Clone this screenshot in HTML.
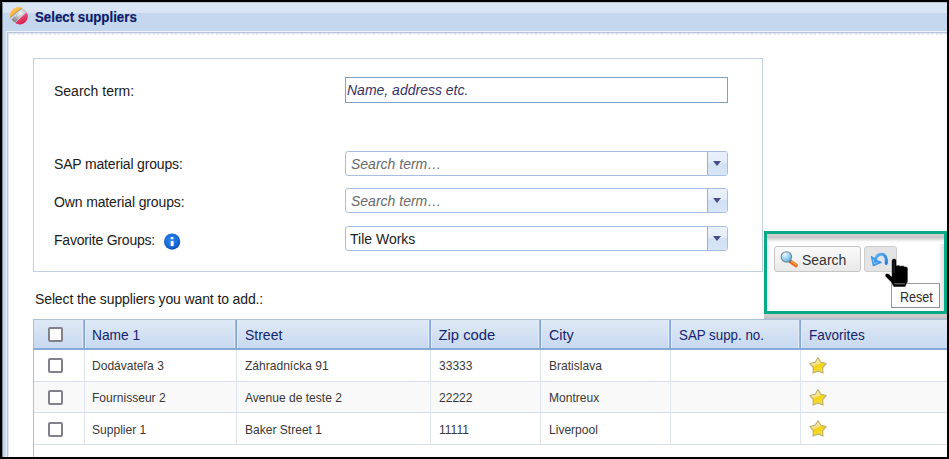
<!DOCTYPE html>
<html><head><meta charset="utf-8">
<style>
*{margin:0;padding:0;box-sizing:border-box}
html,body{width:949px;height:459px;overflow:hidden;background:#000}
body{position:relative;font-family:"Liberation Sans",sans-serif;font-size:14px;color:#222}
.a{position:absolute;white-space:nowrap}
.b{position:absolute}
#win{position:absolute;left:2px;top:2px;width:945px;height:455px;background:#c4d7ee;overflow:hidden}
#tt{position:absolute;left:0;top:0;width:945px;height:11px;background:#d9e5f4}
#title{left:34.5px;top:8.5px;font-weight:bold;font-size:14.5px;transform:scaleX(0.915);transform-origin:0 0;color:#0e1a6a;-webkit-text-stroke:0.2px #0e1a6a;line-height:16px}
.lbl{font-size:14px;line-height:16px;color:#1a1a1a}
.fs{position:absolute;left:33px;top:58px;width:730px;height:214px;border:1px solid #c2d0e2}
.inp{position:absolute;left:345px;width:383px;height:26px;border:1px solid #7f9fc6;background:#fff}
.dd{position:absolute;left:345px;width:383px;height:25px;border:1px solid #a7bfdf;border-radius:3px;background:#fff}
.ddb{position:absolute;right:0;top:0;width:20px;height:23px;border-left:1px solid #95b0d6;border-radius:0 2px 2px 0;background:linear-gradient(#eaf1fb 0,#e3ecf8 45%,#d2e1f3 50%,#d7e5f5 100%)}
.ddb:after{content:"";position:absolute;left:5px;top:9px;border-left:4px solid transparent;border-right:4px solid transparent;border-top:5px solid #4a4d8c}
.ph{font-style:italic;color:#6a6a6a;font-size:14px;line-height:16px}
.btn{position:absolute;top:246px;height:26px;border:1px solid #c4c4c4;border-radius:3px;background:linear-gradient(#fafafa,#e9e9e9)}
.tbl{position:absolute;left:33px;top:319px;width:914px}
.hdr{position:absolute;left:0;top:0;width:914px;height:31px;border-top:1px solid #adc0da;border-left:1px solid #a9bfd9;border-bottom:2px solid #86a9d9;background:linear-gradient(#dfe9f6,#c7d9f0)}
.hc{position:absolute;top:0;height:28px;width:2px;background:linear-gradient(90deg,#98b6e0 50%,#85a8da 50%);box-shadow:-1px 0 0 #e3ebf6,1px 0 0 #e3ebf6}
.ht{position:absolute;top:7.2px;font-size:14.8px;transform-origin:0 0;line-height:16px;color:#15246e}
.row{position:absolute;left:0;width:914px;border-bottom:1px solid #d9deeb}
.bc{position:absolute;width:1px;background:#dde4f0}
.td{position:absolute;font-size:13.1px;line-height:14px;color:#383838;transform:scaleX(0.92);transform-origin:0 0}
.cb{position:absolute;left:15px;width:15px;height:15px;border:2px solid #83808b;border-radius:2px;background:#fff}
</style></head><body>
<div id="win">
  <div id="tt"></div>
  <div class="b" style="left:0;top:0;width:1px;height:455px;background:#7d8794"></div>
  <div class="b" style="left:0;top:0;width:945px;height:1px;background:#b9c6d6"></div>
  <div class="b" style="left:4px;top:29px;width:941px;height:426px;background:#eef2f8"></div>
  <div class="b" style="left:5px;top:30px;width:940px;height:425px;background:#b6c5d9"></div>
  <div class="b" style="left:6px;top:31px;width:939px;height:424px;background:#e0e7f0"></div>
  <div class="b" style="left:7px;top:32px;width:938px;height:423px;background:#fff;border-top:1px solid #f1f4f8"></div>
  <div class="b" style="left:7px;top:31px;width:938px;height:1px;background:repeating-linear-gradient(90deg,#d9e0ea 0 1.5px,#eaeef4 1.5px 4.5px)"></div>
  <div class="b" style="left:7px;top:32px;width:938px;height:1px;background:repeating-linear-gradient(90deg,#e8edf4 0 1.5px,#f6f8fb 1.5px 4.5px)"></div>
</div>
<!-- title icon -->
<svg class="b" style="left:6px;top:4px" width="26" height="26" viewBox="0 0 26 26">
  <defs>
    <linearGradient id="go" x1="0.2" y1="0.1" x2="0.8" y2="0.9"><stop offset="0" stop-color="#ffc85a"/><stop offset="1" stop-color="#eea02a"/></linearGradient>
    <linearGradient id="gp" x1="0.2" y1="0" x2="0.7" y2="1"><stop offset="0" stop-color="#f7a2b6"/><stop offset="0.45" stop-color="#e6456e"/><stop offset="1" stop-color="#d21a4a"/></linearGradient>
    <radialGradient id="gg" cx="0.6" cy="0.3" r="0.7"><stop offset="0" stop-color="#f6f6f6"/><stop offset="0.6" stop-color="#b4b4b4"/><stop offset="1" stop-color="#868686"/></radialGradient>
  </defs>
  <path d="M5.6,15.4 Q10.6,10.2 17.2,5 A8.6,8.6 0 0 1 20.2,8 L9,18.4 A8.6,8.6 0 0 1 5.6,15.4 Z" fill="url(#gg)"/>
  <path d="M4.0,13.8 A8.8,8.8 0 0 1 16.6,4.0 Q10.4,8.4 4.0,13.8 Z" fill="url(#go)"/>
  <path d="M16.6,4.0 Q10.4,8.4 4.0,13.8" fill="none" stroke="#5a5048" stroke-width="0.6" opacity="0.7"/>
  <path d="M9.2,19 L20.6,8.2 A8,8 0 0 1 9.2,19 Z" fill="url(#gp)"/>
</svg>
<div class="a" id="title">Select suppliers</div>

<div class="fs"></div>
<div class="a lbl" style="left:54px;top:83px">Search term:</div>
<div class="inp" style="top:77px"><div class="a ph" style="left:1px;top:4px;color:#33336a">Name, address etc.</div></div>
<div class="a lbl" style="left:54px;top:156px;letter-spacing:-0.17px">SAP material groups:</div>
<div class="a lbl" style="left:54px;top:194px;letter-spacing:-0.13px">Own material groups:</div>
<div class="a lbl" style="left:54px;top:232px;letter-spacing:-0.2px">Favorite Groups:</div>
<svg class="b" style="left:163px;top:232.5px" width="18" height="18" viewBox="0 0 18 18">
  <defs><radialGradient id="gi" cx="0.45" cy="0.4" r="0.6"><stop offset="0" stop-color="#2c8af2"/><stop offset="0.7" stop-color="#1668d8"/><stop offset="1" stop-color="#0a48b0"/></radialGradient></defs>
  <circle cx="9.1" cy="8.6" r="8.1" fill="url(#gi)"/>
  <rect x="7.6" y="3.9" width="3" height="2.4" rx="1" fill="#fff"/>
  <rect x="7.7" y="7.9" width="2.9" height="5.2" fill="#fff"/>
</svg>
<div class="dd" style="top:151px"><div class="a ph" style="left:5px;top:4px">Search term…</div><div class="ddb"></div></div>
<div class="dd" style="top:188px"><div class="a ph" style="left:5px;top:4px">Search term…</div><div class="ddb"></div></div>
<div class="dd" style="top:226px"><div class="a lbl" style="left:4px;top:4px;color:#222">Tile Works</div><div class="ddb"></div></div>

<!-- green highlight box -->
<div class="b" style="left:761px;top:232px;width:3px;height:82px;background:linear-gradient(90deg,rgba(0,0,0,0),rgba(0,0,0,0.05))"></div>
<div class="b" style="left:764px;top:314px;width:183px;height:5px;background:linear-gradient(#d3caca 0,#d0c9c9 2px,#c7c7c7 2px,#c9c9c9 4px,#b4bccb 4px,#b4bccb 5px)"></div>
<div class="b" style="left:764px;top:231px;width:183px;height:83px;border:3px solid #08a986;background:#fff"></div>
<div class="b" style="left:767px;top:234px;width:1px;height:77px;background:#efe3e3"></div>
<div class="b" style="left:768px;top:234px;width:4px;height:77px;background:linear-gradient(90deg,#efefef,#fff)"></div>
<div class="b" style="left:943px;top:234px;width:1px;height:77px;background:#ede0e0"></div>
<div class="b" style="left:938px;top:234px;width:5px;height:77px;background:linear-gradient(90deg,#fff,#e2e2e2)"></div>
<div class="b" style="left:767px;top:234px;width:177px;height:10px;background:linear-gradient(#d6cdcd 0,#d2cbcb 2px,#c7c7c7 2px,#c9c9c9 4px,#dadada 5px,#e8e8e8 6px,#f4f4f4 7px,#fff 9px)"></div>
<div class="btn" style="left:774px;width:87px"></div>
<svg class="b" style="left:776px;top:248px" width="26" height="22" viewBox="0 0 26 22">
  <defs><radialGradient id="gl" cx="0.35" cy="0.28" r="0.75"><stop offset="0" stop-color="#f0fbff"/><stop offset="0.35" stop-color="#b6e2fa"/><stop offset="1" stop-color="#5eaee4"/></radialGradient></defs>
  <line x1="14.2" y1="13.4" x2="20" y2="17.4" stroke="#ec6a26" stroke-width="3.8" stroke-linecap="round"/>
  <line x1="15.2" y1="13.3" x2="20.4" y2="16.9" stroke="#ffb840" stroke-width="1.1" stroke-linecap="round" opacity="0.9"/>
  <line x1="13.2" y1="12.6" x2="14.8" y2="13.8" stroke="#6c6c6c" stroke-width="3" />
  <circle cx="10.4" cy="8.9" r="5.2" fill="url(#gl)" stroke="#7c8890" stroke-width="1.1"/>
</svg>
<div class="a" style="left:802px;top:252px;font-size:14px;line-height:16px;color:#333">Search</div>

<div class="btn" style="left:864px;width:33px;background:#e4e4e4;border-color:#cdcdcd"></div>
<svg class="b" style="left:866px;top:248px" width="26" height="22" viewBox="0 0 26 22">
  <defs><linearGradient id="gu" x1="0" y1="0" x2="1" y2="1"><stop offset="0" stop-color="#64b4f6"/><stop offset="1" stop-color="#1a7ce0"/></linearGradient></defs>
  <path d="M20.2,15.4 C20.8,10.5 19.4,6.4 15.8,6.2 C12.6,6.1 10.4,8.4 9.4,11.4" fill="none" stroke="url(#gu)" stroke-width="3" stroke-linecap="round"/>
  <path d="M5.4,8.6 L7.3,17.6 L15.2,14.4 L11,12.6 Z" fill="#3c96ec" stroke="#3c96ec" stroke-width="1.2" stroke-linejoin="round"/>
  <path d="M7,11 L8.2,15.8 L11.5,14.4" fill="none" stroke="#a8d6ff" stroke-width="1" opacity="0.75"/>
  <path d="M14.5,7.4 C17,7.4 18.8,9.6 19,12" fill="none" stroke="#a8d6ff" stroke-width="0.8" opacity="0.6"/>
</svg>

<!-- tooltip -->
<div class="b" style="left:891px;top:283px;width:50px;height:26px;border:1px solid #9a9a9a;width:49px;height:25px;border-right-color:#8c8c8c;border-bottom-color:#8c8c8c;background:#fff"></div>
<div class="a" style="left:899.5px;top:289.4px;font-size:14.4px;line-height:16px;color:#2c2c2c;transform:scaleX(0.87);transform-origin:0 0">Reset</div>
<!-- hand cursor -->
<svg class="b" style="left:0;top:0" width="949" height="459" viewBox="0 0 949 459">
  <path d="M891.6,260.8 Q891.6,258.4 894.1,258.4 Q896.6,258.4 896.6,260.8 L896.6,265.4 Q899.4,264.6 900.6,265.9 Q903.4,265.1 904.6,266.5 Q907.9,265.9 907.9,268.6 L907.9,281.5 L905.2,287 L893.6,287 L890.8,282 L885.4,276.5 Q884.2,274.6 886.4,273.6 Q888.2,273.1 889.6,274.5 L891.6,276.5 Z" fill="#000" stroke="#fff" stroke-width="0.5"/>
  <line x1="894.2" y1="283.8" x2="905" y2="283.8" stroke="#8a8a8a" stroke-width="0.9"/>
  <line x1="894.1" y1="262" x2="894.1" y2="273" stroke="#3a3a3a" stroke-width="0.9"/>
</svg>

<div class="a" style="left:35px;top:291px;font-size:14px;letter-spacing:-0.12px;line-height:16px;color:#1a1a1a">Select the suppliers you want to add.:</div>

<!-- table -->
<div class="tbl">
  <div class="hdr">
    <div class="cb" style="top:7px;left:14px"></div>
    <div class="hc" style="left:49px"></div>
    <div class="hc" style="left:201px"></div>
    <div class="hc" style="left:395px"></div>
    <div class="hc" style="left:505px"></div>
    <div class="hc" style="left:635px"></div>
    <div class="hc" style="left:765px"></div>
    <div class="ht" style="left:58px;transform:scaleX(0.93)">Name 1</div>
    <div class="ht" style="left:211px;transform:scaleX(0.945)">Street</div>
    <div class="ht" style="left:404.5px;transform:scaleX(1)">Zip code</div>
    <div class="ht" style="left:515px;transform:scaleX(0.97)">City</div>
    <div class="ht" style="left:645px;transform:scaleX(0.9)">SAP supp. no.</div>
    <div class="ht" style="left:775px;transform:scaleX(0.915)">Favorites</div>
  </div>
  <div class="row" style="top:31px;height:32px;background:#fff"></div>
  <div class="row" style="top:63px;height:31px;background:#f9f9f9"></div>
  <div class="row" style="top:94px;height:32px;background:#fff"></div>
  <div class="bc" style="left:51px;top:31px;height:95px"></div>
  <div class="bc" style="left:203px;top:31px;height:95px"></div>
  <div class="bc" style="left:397px;top:31px;height:95px"></div>
  <div class="bc" style="left:507px;top:31px;height:95px"></div>
  <div class="bc" style="left:637px;top:31px;height:95px"></div>
  <div class="bc" style="left:767px;top:31px;height:95px"></div>
  <div class="b" style="left:0;top:31px;width:1px;height:107px;background:#a9bfd9"></div>
  <div class="cb" style="top:39px"></div>
  <div class="td" style="left:59px;top:40px">Dodávateľa 3</div>
  <div class="td" style="left:212px;top:40px">Záhradnícka 91</div>
  <div class="td" style="left:405.5px;top:40px">33333</div>
  <div class="td" style="left:516px;top:40px">Bratislava</div>
  <svg class="b" style="left:775px;top:37px" width="20" height="20" viewBox="0 0 20 20"><use href="#star"/></svg>
  <div class="cb" style="top:71px"></div>
  <div class="td" style="left:59px;top:72.2px">Fournisseur 2</div>
  <div class="td" style="left:212px;top:72.2px">Avenue de teste 2</div>
  <div class="td" style="left:405.5px;top:72.2px">22222</div>
  <div class="td" style="left:516px;top:72.2px">Montreux</div>
  <svg class="b" style="left:775px;top:68.5px" width="20" height="20" viewBox="0 0 20 20"><use href="#star"/></svg>
  <div class="cb" style="top:103px"></div>
  <div class="td" style="left:59px;top:103.9px">Supplier 1</div>
  <div class="td" style="left:212px;top:103.9px">Baker Street 1</div>
  <div class="td" style="left:405.5px;top:103.9px">11111</div>
  <div class="td" style="left:516px;top:103.9px">Liverpool</div>
  <svg class="b" style="left:775px;top:100px" width="20" height="20" viewBox="0 0 20 20"><use href="#star"/></svg>
</div>
<svg width="0" height="0" style="position:absolute"><defs>
<linearGradient id="gs" x1="0.25" y1="0" x2="0.65" y2="1"><stop offset="0" stop-color="#f6eec8"/><stop offset="0.42" stop-color="#f3e08a"/><stop offset="0.52" stop-color="#f4d20e"/><stop offset="1" stop-color="#f7e447"/></linearGradient>
<g id="star"><path d="M10.00 1.70 L12.88 6.24 L18.08 7.57 L14.66 11.71 L15.00 17.08 L10.00 15.10 L5.00 17.08 L5.34 11.71 L1.92 7.57 L7.12 6.24 Z" fill="url(#gs)" stroke="#bcae6a" stroke-width="1.1" stroke-linejoin="round"/></g>
</defs></svg>
</body></html>
